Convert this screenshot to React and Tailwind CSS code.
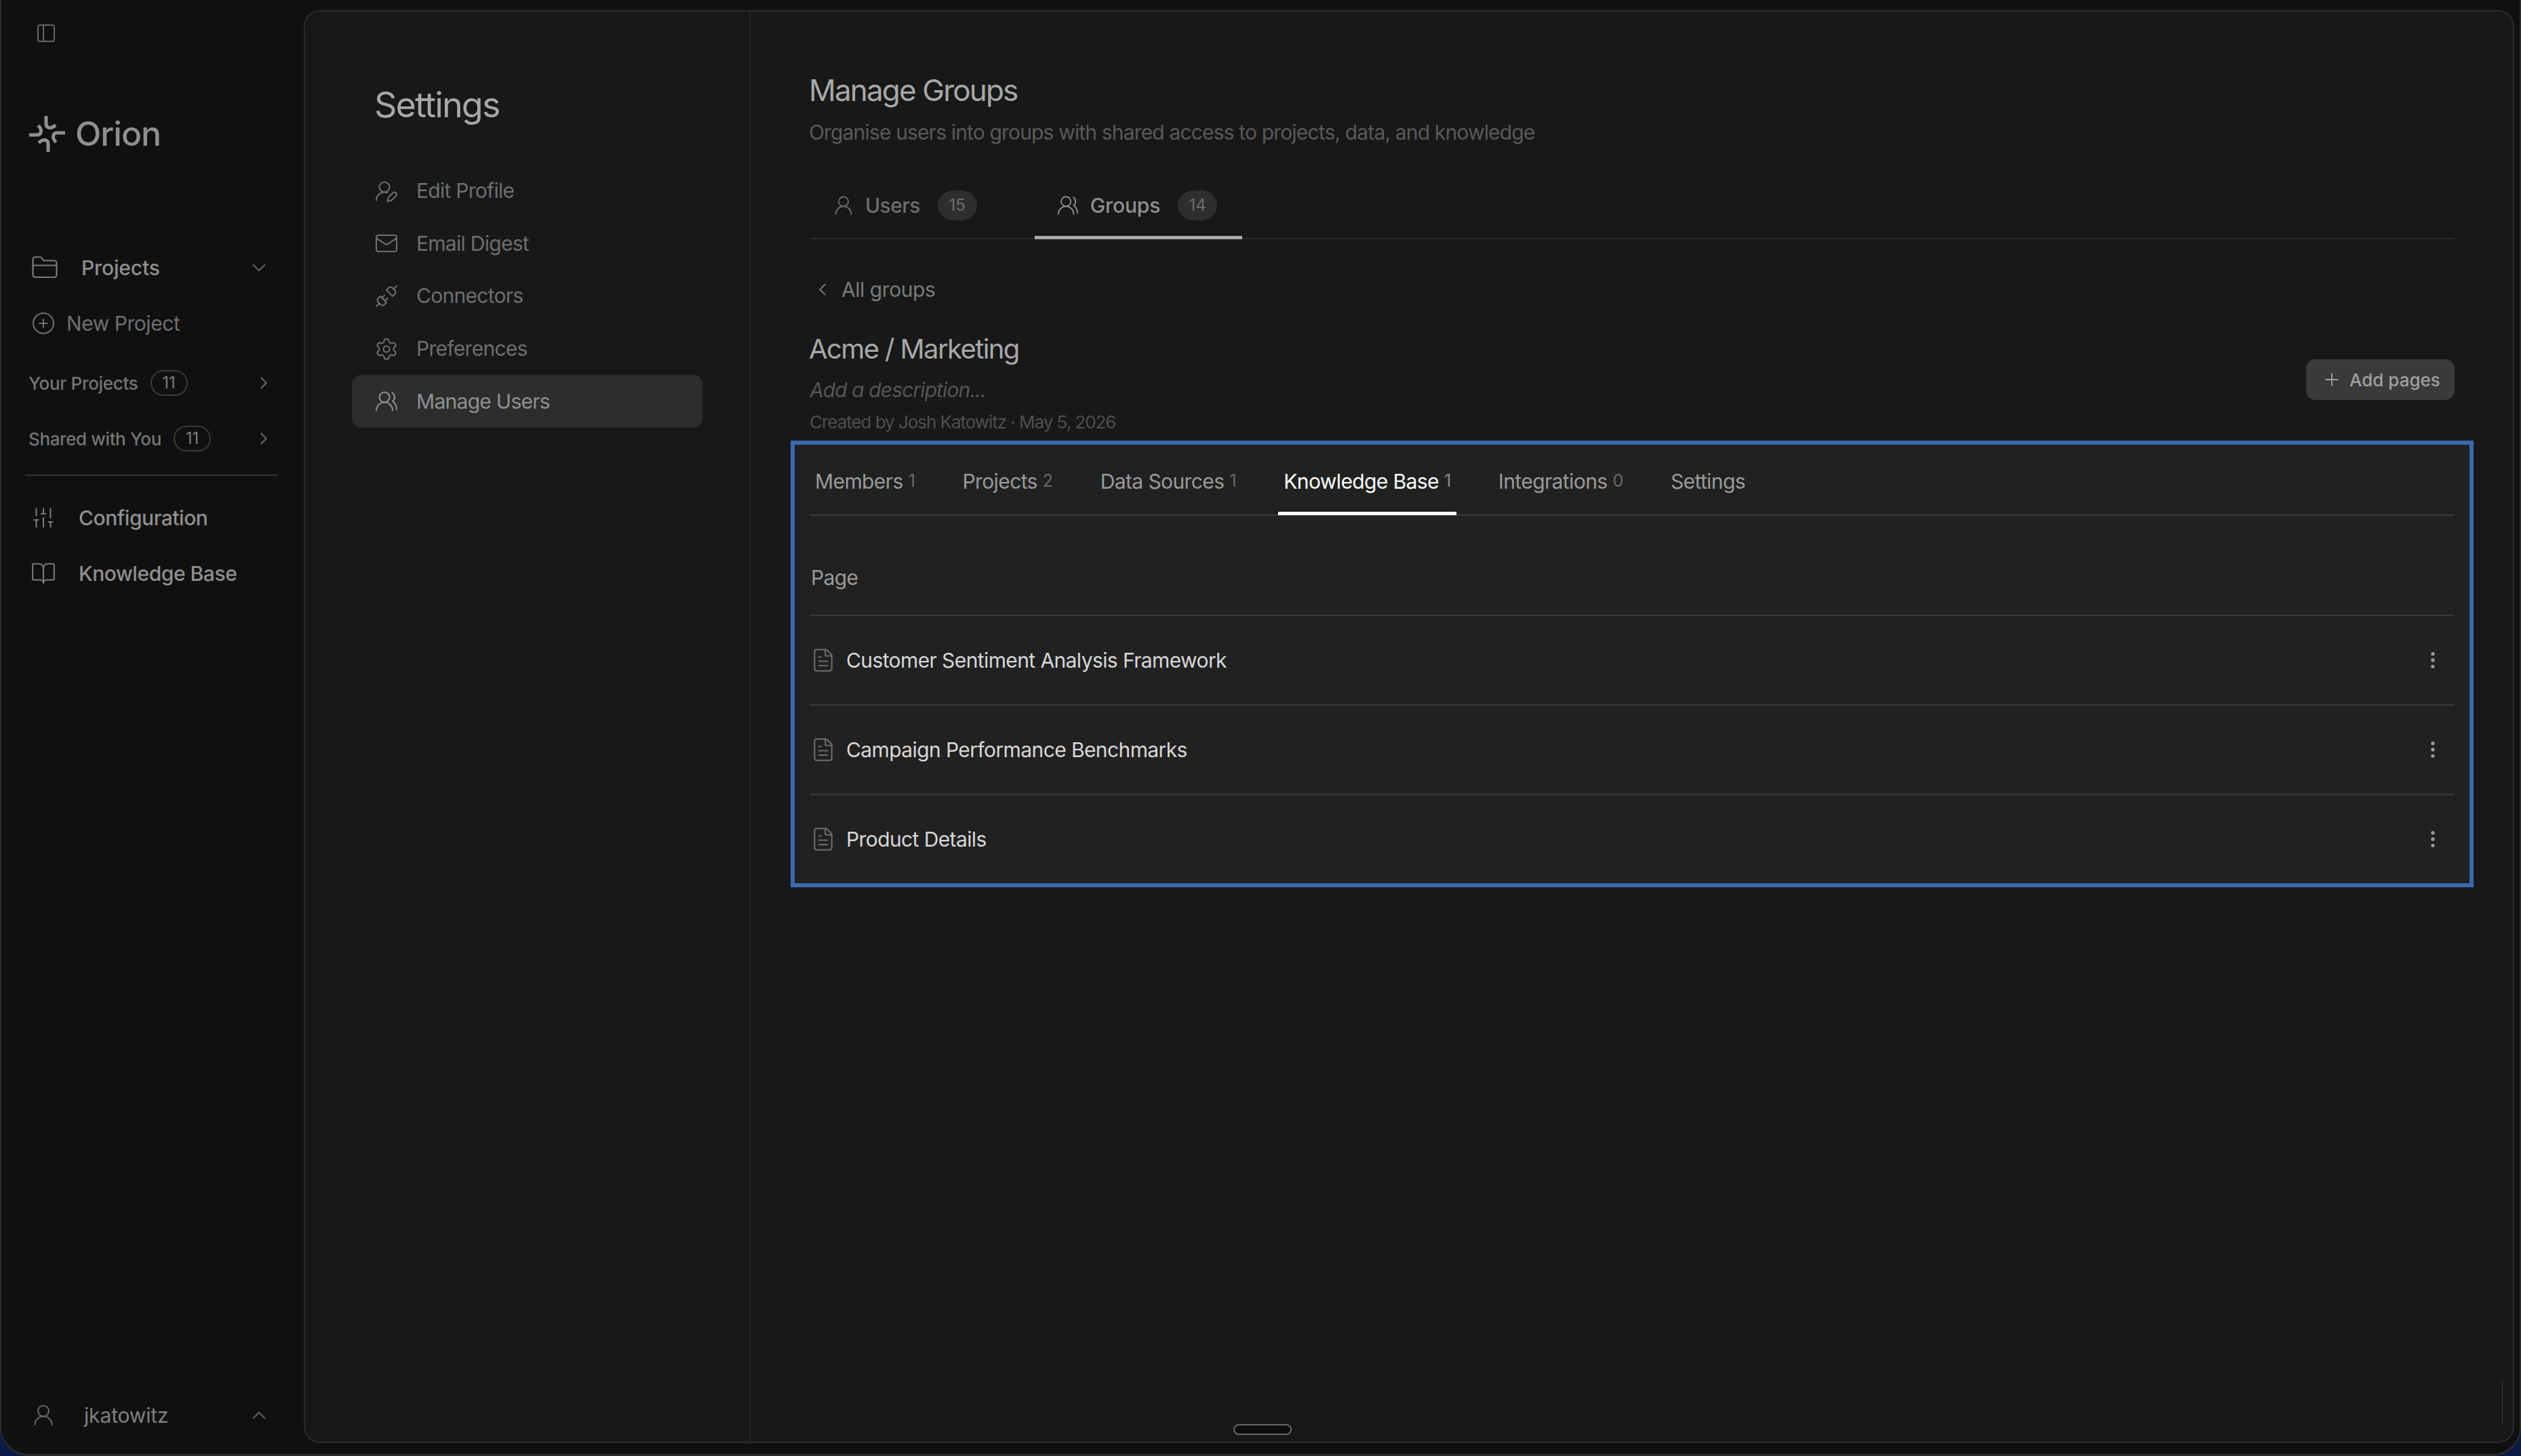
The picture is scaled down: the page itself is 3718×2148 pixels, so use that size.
import React from "react";
import {
  BookOpen,
  ChevronDown,
  ChevronLeft,
  ChevronRight,
  ChevronUp,
  CirclePlus,
  EllipsisVertical,
  FileText,
  FolderClosed,
  Mail,
  PanelLeft,
  Plus,
  Settings,
  SlidersVertical,
  Unplug,
  UserRound,
  UserRoundPen,
  UsersRound,
} from "lucide-react";

function OrionLogo() {
  // one hooked arm, turned four times round the centre
  const arm = "M26 1V13C26 17 28 18 31 18.5C34 19 37 17 40 14.5";
  return (
    <svg width="54" height="55" viewBox="0 0 54 55" fill="none" stroke="#8f8f8f" strokeWidth="5">
      <path d={arm} />
      <path d={arm} transform="rotate(90 27.5 27.5)" />
      <path d={arm} transform="rotate(180 27.5 27.5)" />
      <path d={arm} transform="rotate(270 27.5 27.5)" />
    </svg>
  );
}

const settingsNav = [
  { label: "Edit Profile", icon: UserRoundPen },
  { label: "Email Digest", icon: Mail },
  { label: "Connectors", icon: Unplug },
  { label: "Preferences", icon: Settings },
  { label: "Manage Users", icon: UsersRound, active: true },
];

const groupTabs = [
  { label: "Members", count: 1 },
  { label: "Projects", count: 2 },
  { label: "Data Sources", count: 1 },
  { label: "Knowledge Base", count: 1, active: true },
  { label: "Integrations", count: 0 },
  { label: "Settings" },
];

const pages = [
  "Customer Sentiment Analysis Framework",
  "Campaign Performance Benchmarks",
  "Product Details",
];

function Sidebar() {
  return (
    <aside className="flex w-[446px] shrink-0 flex-col text-[#8f8f8f]">
      <div className="pl-[50px] pt-[33px] text-[#666666]">
        <PanelLeft size={32} strokeWidth={1.5} />
      </div>

      <div className="mt-[105px] flex h-[55px] items-center pl-[40px]">
        <OrionLogo />
        <span className="ml-[15px] text-[50px] font-medium tracking-[-0.02em]">Orion</span>
      </div>

      <div className="mt-[150px] flex h-[40px] items-center pl-[43px] pr-[49px]">
        <FolderClosed size={42} strokeWidth={1.25} className="shrink-0 text-[#7c7c7c]" />
        <span className="ml-[33px] text-[30px] font-medium tracking-[-0.005em]">Projects</span>
        <ChevronDown size={34} strokeWidth={1.5} className="ml-auto text-[#5f5f5f]" />
      </div>

      <div className="mt-[42px] flex h-[40px] items-center pl-[44px] text-[#6f6f6f]">
        <CirclePlus size={36} strokeWidth={1.4} className="shrink-0" />
        <span className="ml-[16px] text-[30px] tracking-[-0.015em]">New Project</span>
      </div>

      <div className="mt-[48px] flex h-[40px] items-center pl-[40px] pr-[44px] text-[#757575]">
        <span className="text-[26px] font-medium tracking-[-0.012em]">Your Projects</span>
        <span className="ml-[18px] flex h-[38px] w-[55px] items-center justify-center rounded-full border-2 border-[#3a3a3a] text-[24px] text-[#7c7c7c]">
          11
        </span>
        <ChevronRight size={30} strokeWidth={1.6} className="ml-auto text-[#6a6a6a]" />
      </div>

      <div className="mt-[42px] flex h-[40px] items-center pl-[40px] pr-[44px] text-[#757575]">
        <span className="text-[26px] font-medium tracking-[-0.015em]">Shared with You</span>
        <span className="ml-[18px] flex h-[38px] w-[55px] items-center justify-center rounded-full border-2 border-[#3a3a3a] text-[24px] text-[#7c7c7c]">
          11
        </span>
        <ChevronRight size={30} strokeWidth={1.6} className="ml-auto text-[#6a6a6a]" />
      </div>

      <div className="ml-[35px] mr-[38px] mt-[33px] h-[2px] bg-[#333333]" />

      <div className="mt-[42px] flex h-[40px] items-center pl-[44px]">
        <SlidersVertical size={36} strokeWidth={1.4} className="shrink-0 text-[#7c7c7c]" />
        <span className="ml-[34px] text-[30px] font-medium tracking-[-0.015em]">Configuration</span>
      </div>

      <div className="mt-[42px] flex h-[40px] items-center pl-[43px]">
        <BookOpen size={38} strokeWidth={1.3} className="shrink-0 text-[#7c7c7c]" />
        <span className="ml-[33px] text-[30px] font-medium tracking-[-0.015em]">Knowledge Base</span>
      </div>

      <div className="mb-[37px] mt-auto flex h-[40px] items-center pl-[43px] pr-[49px]">
        <UserRound size={38} strokeWidth={1.3} className="shrink-0 text-[#666666]" />
        <span className="ml-[41px] text-[30px] tracking-[-0.005em] text-[#7f7f7f]">jkatowitz</span>
        <ChevronUp size={34} strokeWidth={1.5} className="ml-auto text-[#5f5f5f]" />
      </div>
    </aside>
  );
}

function SettingsNav() {
  return (
    <div className="w-[657px] shrink-0 border-r-2 border-[#262626] pl-[69px]">
      <h1 className="ml-[33px] mt-[108px] flex h-[60px] items-center text-[52px] tracking-[-0.035em] text-[#a8a8a8]">
        Settings
      </h1>
      <nav className="mt-[58px] w-[517px]">
        {settingsNav.map((item) => {
          const Icon = item.icon;
          return (
            <div
              key={item.label}
              className={`flex h-[77.6px] items-center rounded-[14px] pl-[33px] ${
                item.active ? "bg-[#2d2d2d] text-[#8f8f8f]" : "text-[#6e6e6e]"
              }`}
            >
              <Icon size={36} strokeWidth={1.4} className="shrink-0" />
              <span className="ml-[26px] text-[30px] tracking-[-0.024em]">{item.label}</span>
            </div>
          );
        })}
      </nav>
    </div>
  );
}

function KnowledgeBaseCard() {
  return (
    <section className="-mx-[28px] mt-[13px] border-[6px] border-[#3a69ae] bg-[#212121] px-[22px]">
      {/* inner tabs */}
      <div className="flex h-[105px] gap-[53.6px] border-b-2 border-[#3a3a3a]">
        {groupTabs.map((tab) => (
          <div
            key={tab.label}
            className={`-mb-[1px] flex items-center gap-[8px] border-b-[5px] px-[8px] pt-[9px] ${
              tab.active ? "border-white text-white" : "border-transparent text-[#9a9a9a]"
            }`}
          >
            <span className="text-[30px] tracking-[-0.02em]">{tab.label}</span>
            {tab.count !== undefined && (
              <span className={`text-[25px] ${tab.active ? "text-[#8a8a8a]" : "text-[#6a6a6a]"}`}>
                {tab.count}
              </span>
            )}
          </div>
        ))}
      </div>

      <div className="flex h-[148px] items-end border-b-2 border-[#3a3a3a] pb-[35px] pl-[2px] text-[30px] tracking-[-0.02em] text-[#9a9a9a]">
        <span className="flex h-[40px] items-center">Page</span>
      </div>

      {pages.map((page, i) => (
        <div
          key={page}
          className={`flex items-center pl-[1px] pr-[16px] ${
            i < pages.length - 1 ? "h-[132px] border-b-2 border-[#3a3a3a]" : "h-[130px]"
          }`}
        >
          <FileText size={38} strokeWidth={1.3} className="shrink-0 text-[#6e6e6e]" />
          <span className="ml-[15px] text-[30px] tracking-[-0.02em] text-[#d8d8d8]">{page}</span>
          <EllipsisVertical size={32} strokeWidth={2} className="ml-auto text-[#9a9a9a]" />
        </div>
      ))}
    </section>
  );
}

function ManageGroups() {
  return (
    <main className="min-w-0 flex-1 pl-[87px] pr-[86px]">
      <h2 className="-ml-[1px] mt-[89px] flex h-[54px] items-center text-[44px] tracking-[-0.042em] text-[#a8a8a8]">
        Manage Groups
      </h2>
      <p className="-ml-[1px] mt-[15px] flex h-[40px] items-center text-[30px] tracking-[-0.028em] text-[#5a5a5a]">
        Organise users into groups with shared access to projects, data, and knowledge
      </p>

      {/* Users / Groups tabs */}
      <div className="mt-[38px] flex h-[100px] gap-[55px] border-b-2 border-[#2a2a2a] pl-[3px]">
        <div className="flex h-[100px] items-center border-b-[5px] border-transparent px-[30px] pt-[5px] text-[#6e6e6e]">
          <UserRound size={34} strokeWidth={1.3} className="shrink-0" />
          <span className="ml-[15px] text-[30px] font-medium tracking-[-0.02em]">Users</span>
          <span className="ml-[26px] flex h-[44px] w-[58px] items-center justify-center rounded-full bg-[#2e2e2e] text-[24px] text-[#6e6e6e]">
            15
          </span>
        </div>
        <div className="flex h-[100px] items-center border-b-[5px] border-[#aaaaaa] pl-[32px] pr-[37px] pt-[5px] text-[#8f8f8f]">
          <UsersRound size={34} strokeWidth={1.3} className="shrink-0" />
          <span className="ml-[16px] text-[30px] font-medium tracking-[-0.005em]">Groups</span>
          <span className="ml-[26px] flex h-[44px] w-[58px] items-center justify-center rounded-full bg-[#2e2e2e] text-[24px] text-[#6e6e6e]">
            14
          </span>
        </div>
      </div>

      <div className="mt-[57px] flex h-[34px] items-center pl-[4px] text-[#7a7a7a]">
        <ChevronLeft size={30} strokeWidth={1.6} className="shrink-0" />
        <span className="ml-[13px] text-[30px] tracking-[-0.015em]">All groups</span>
      </div>

      <div className="mt-[46px] flex items-start justify-between">
        <div>
          <h3 className="-ml-[1px] flex h-[50px] items-center text-[40px] tracking-[-0.04em] text-[#a8a8a8]">
            Acme / Marketing
          </h3>
          <p className="mt-[15px] flex h-[40px] items-center text-[30px] italic tracking-[-0.03em] text-[#555555]">
            Add a description...
          </p>
          <p className="mt-[12px] flex h-[30px] items-center text-[26px] tracking-[-0.04em] text-[#4f4f4f]">
            Created by Josh Katowitz · May 5, 2026
          </p>
        </div>
        <button className="mt-[40px] flex h-[60px] w-[219px] items-center rounded-[14px] bg-[#3a3a3a] pl-[23px] text-[#a0a0a0]">
          <Plus size={30} strokeWidth={1.5} className="shrink-0" />
          <span className="ml-[11px] text-[26px] font-medium">Add pages</span>
        </button>
      </div>

      <KnowledgeBaseCard />
    </main>
  );
}

export default function App() {
  return (
    <div className="flex h-[2148px] w-[3718px] overflow-hidden bg-[#0a1c46] font-[Inter,sans-serif]">
      <div className="flex flex-1 rounded-b-[42px] border-x-2 border-b-[3px] border-[#2c2c2c] bg-[#101010] pr-[8px]">
        <Sidebar />
        <div className="relative mb-[16px] mt-[15px] flex flex-1 rounded-[24px] border-2 border-[#2c2c2c] bg-[#181818]">
          <SettingsNav />
          <ManageGroups />
          {/* resize handle and faint scrollbar sit over the panel */}
          <div className="absolute bottom-[10px] left-[1369px] h-[16px] w-[86px] rounded-full border-2 border-[#6a6a6a] bg-[#0c0c0c]" />
          <div className="absolute bottom-[25px] right-[15px] h-[64px] w-[1px] bg-[#3a3a3a]" />
        </div>
      </div>
    </div>
  );
}
